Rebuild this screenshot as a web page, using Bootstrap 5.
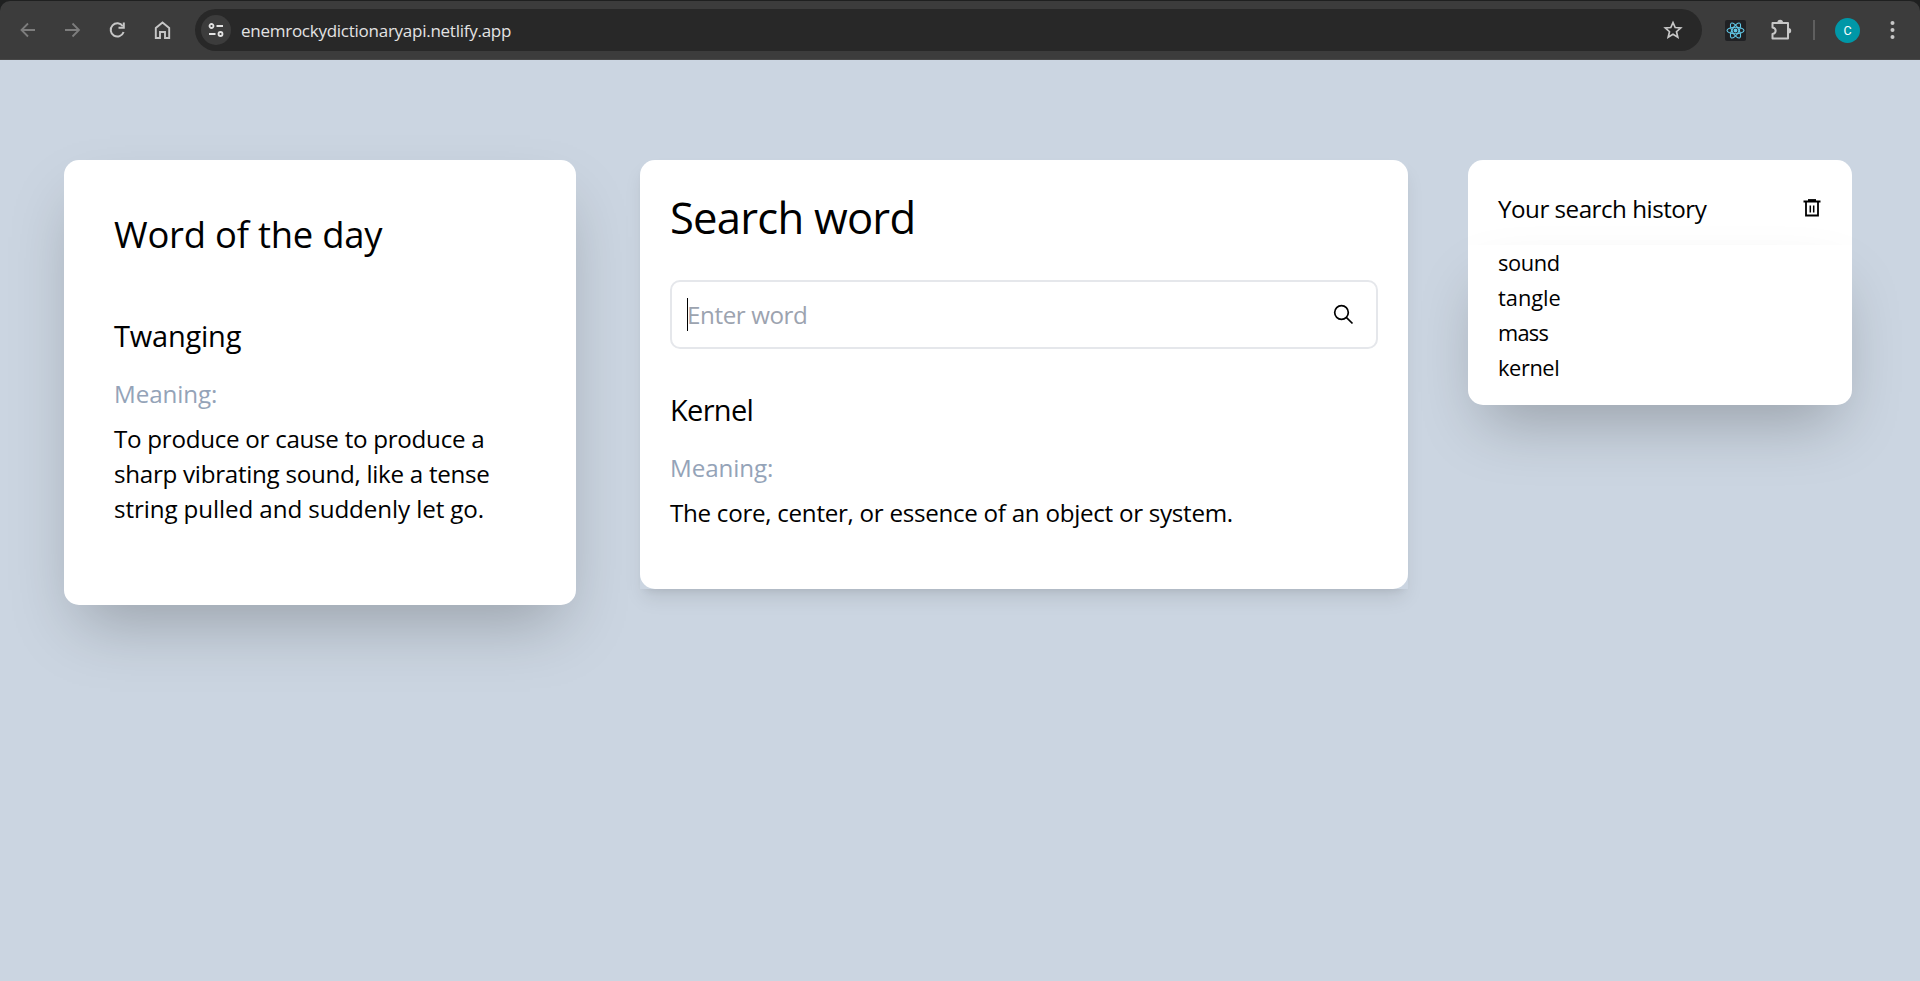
<!DOCTYPE html>
<html lang="en">
<head>
<meta charset="utf-8">
<meta name="viewport" content="width=device-width, initial-scale=1">
<title>Dictionary</title>
<link href="https://cdn.jsdelivr.net/npm/bootstrap@5.3.0/dist/css/bootstrap.min.css" rel="stylesheet">
<style>
html,body{height:100%}
body{background:#cbd5e1;color:#000;font-family:"Open Sans","Noto Sans",sans-serif;overflow:hidden}
/* browser toolbar */
.chrome-wrap{background:#1f2020;padding-top:1px}
.chrome{height:59px;background:#3c3c3c;border-radius:10px 10px 0 0;border-bottom:1px solid #484848;color:#c7c7c7;padding-left:18px}
.chrome svg{display:block;flex:none;fill:none;stroke:currentColor}
.nav-set{gap:25px}
.dim{color:#7d7d7d}
.omnibox{height:42px;background:#282828;border-radius:21px;margin-left:22px;width:1507px;padding:0 19px 0 6px;color:#e3e3e3}
.site-btn{width:30px;height:30px;background:#3c3c3c}
.url-txt{font-size:17px;line-height:24px;margin:2px 0 0 10px;letter-spacing:-.26px;white-space:nowrap}
.star-ico{color:#c7c7c7}
.react-ico{width:21px;height:21px;background:#202124;border-radius:2px;margin-left:23px;color:#61c9e8}
.puzzle-ico{margin-left:24px}
.vbar{width:2px;height:20px;background:#5f5f5f;margin:0 20px 0 19px}
.avatar{width:25px;height:25px;background:#0097a7;color:#fff;font:12.5px/26px Roboto,sans-serif;margin-right:22px}
/* page */
.page{padding:100px 68px 0 64px}
.panel{background:#fff;border-radius:15px}
.deep-shadow{box-shadow:0 31px 62px -15px rgba(0,0,0,.25)}
.t45{font-size:43.6px;line-height:50px;letter-spacing:-.78px}
.t37{font-size:36.4px;line-height:45px;letter-spacing:-.22px}
.t30{font-size:29px;line-height:40px;letter-spacing:-.22px}
.t25{font-size:24.2px;line-height:35px;letter-spacing:-.29px}
.t22{font-size:21.8px;line-height:35px;letter-spacing:-.4px}
.slate{color:#94a3b8;letter-spacing:-.1px;margin-top:20px}
.meaning{margin-top:10px}
.word-day{width:512px;height:445px;padding:52px 50px 0}
.term{margin-top:59px}
.last-line{letter-spacing:-.11px}
.search-wrap{width:768px;margin-left:64px;box-shadow:0 12px 19px -4px rgba(0,0,0,.1),0 5px 8px -5px rgba(0,0,0,.1)}
.search-panel{height:429px;padding:32px 30px 0}
.search-box{height:69px;border:2px solid #e5e7eb;border-radius:10px;padding:0 22px 0 15px;margin:38px 0 41px}
.caret{width:1px;height:33px;background:#000;flex:none}
.hint{color:#9ca3af;letter-spacing:-.42px;margin-left:-1px}
.found{letter-spacing:-.7px}
.history{width:384px;margin-left:60px}
.history-head{height:85px;background:#fff;border-radius:15px 15px 0 0;padding:0 30px}
.history-title{letter-spacing:-.5px;padding-top:12px}
.trash-ico{margin-top:11px}
.history-list{height:160px;background:#fff;border-radius:0 0 15px 15px;padding:0 30px}
.ls-0{letter-spacing:0}
.ls-tight{letter-spacing:-.75px}
</style>
</head>
<body>
<header class="chrome-wrap">
  <div class="chrome d-flex align-items-center">
    <div class="nav-set d-flex">
      <svg class="dim" width="20" height="20" stroke-width="1.8"><path d="M17 10H4M10 3.500 3.500 10l6.500 6.500"/></svg>
      <svg class="dim" width="20" height="20" stroke-width="1.8"><path d="M2 10h13M9.500 3.500 16 10l-6.500 6.500"/></svg>
      <svg width="20" height="20" stroke-width="2"><path d="M14.800 6.200A6.600 6.600 0 1 0 15.600 12"/><path d="M15.800 2.500v5.200h-5.300"/></svg>
      <svg width="20" height="20" stroke-width="1.9"><path d="M2.800 18V8l6.700-5.500L16.200 8v10H12v-6H7v6z"/></svg>
    </div>
    <div class="omnibox d-flex align-items-center">
      <span class="site-btn rounded-circle d-flex align-items-center justify-content-center">
        <svg width="18" height="18" stroke-width="1.8"><circle cx="4.500" cy="5" r="2"/><path d="M9.500 5H16M2 13h6.500"/><circle cx="13.500" cy="13" r="2"/></svg>
      </span>
      <span class="url-txt">enemrockydictionaryapi.netlify.app</span>
      <svg class="star-ico ms-auto" width="20" height="20" stroke-width="1.7"><path d="m10 2.500 2.200 5 5.500.5-4.200 3.700 1.300 5.500-4.800-3-4.800 3 1.300-5.500L2.300 8l5.500-.5z"/></svg>
    </div>
    <span class="react-ico d-flex align-items-center justify-content-center">
      <svg width="19" height="19" stroke-width="1.1"><ellipse cx="9.500" cy="9.500" rx="8.500" ry="3.300"/><ellipse cx="9.500" cy="9.500" rx="8.500" ry="3.300" transform="rotate(60 9.500 9.500)"/><ellipse cx="9.500" cy="9.500" rx="8.500" ry="3.300" transform="rotate(120 9.500 9.500)"/><circle cx="9.500" cy="9.500" r="1.400" fill="currentColor"/></svg>
    </span>
    <svg class="puzzle-ico" width="24" height="24"><path stroke-width="2" stroke-linejoin="round" d="M2.500 5H18v15.500H2.500V16c4.200-.8 4.200-5.700 0-6.500z"/><path fill="currentColor" stroke="none" d="M7.400 4.500a2.800 2.800 0 0 1 5.600 0zM18.500 10a2.700 2.700 0 0 1 0 5.400z"/></svg>
    <span class="vbar"></span>
    <span class="avatar rounded-circle text-center">C</span>
    <svg width="20" height="20"><g fill="currentColor" stroke="none"><circle cx="10.500" cy="3" r="2"/><circle cx="10.500" cy="10" r="2"/><circle cx="10.500" cy="17" r="2"/></g></svg>
  </div>
</header>

<main class="page d-flex align-items-start">
  <section class="panel deep-shadow word-day">
    <h1 class="t37 fw-normal mb-0">Word of the day</h1>
    <h2 class="term t30 fw-normal mb-0">Twanging</h2>
    <p class="t25 slate mb-0">Meaning:</p>
    <p class="meaning t25 mb-0 text-nowrap">To produce or cause to produce a<br>sharp vibrating sound, like a tense<br><span class="last-line">string pulled and suddenly let go.</span></p>
  </section>

  <div class="search-wrap">
    <section class="panel search-panel">
      <h1 class="t45 fw-normal mb-0">Search word</h1>
      <div class="search-box d-flex align-items-center">
        <span class="caret"></span>
        <span class="t25 hint">Enter word</span>
        <svg class="ms-auto" width="21" height="21" fill="none" stroke="#000" stroke-width="1.700"><circle cx="8.500" cy="8.500" r="6.800"/><path d="m13.300 13.300 6.200 6.200"/></svg>
      </div>
      <h2 class="found t30 fw-normal mb-0">Kernel</h2>
      <p class="t25 slate mb-0">Meaning:</p>
      <p class="meaning t25 mb-0 text-nowrap">The core, center, or essence of an object or system.</p>
    </section>
  </div>

  <aside class="history">
    <div class="history-head d-flex align-items-center justify-content-between">
      <h2 class="history-title t25 fw-normal mb-0">Your search history</h2>
      <svg class="trash-ico" width="20" height="20" fill="none" stroke="#000" stroke-width="1.800"><path d="M1.500 3.500h17M4 4v13.500h12V4"/><path d="M6 2.300h8" stroke-width="2.400"/><path d="M8.300 7.500v7M11.700 7.500v7" stroke-width="1.500"/></svg>
    </div>
    <ul class="history-list deep-shadow list-unstyled mb-0 t22">
      <li>sound</li>
      <li class="ls-0">tangle</li>
      <li class="ls-tight">mass</li>
      <li>kernel</li>
    </ul>
  </aside>
</main>
</body>
</html>
